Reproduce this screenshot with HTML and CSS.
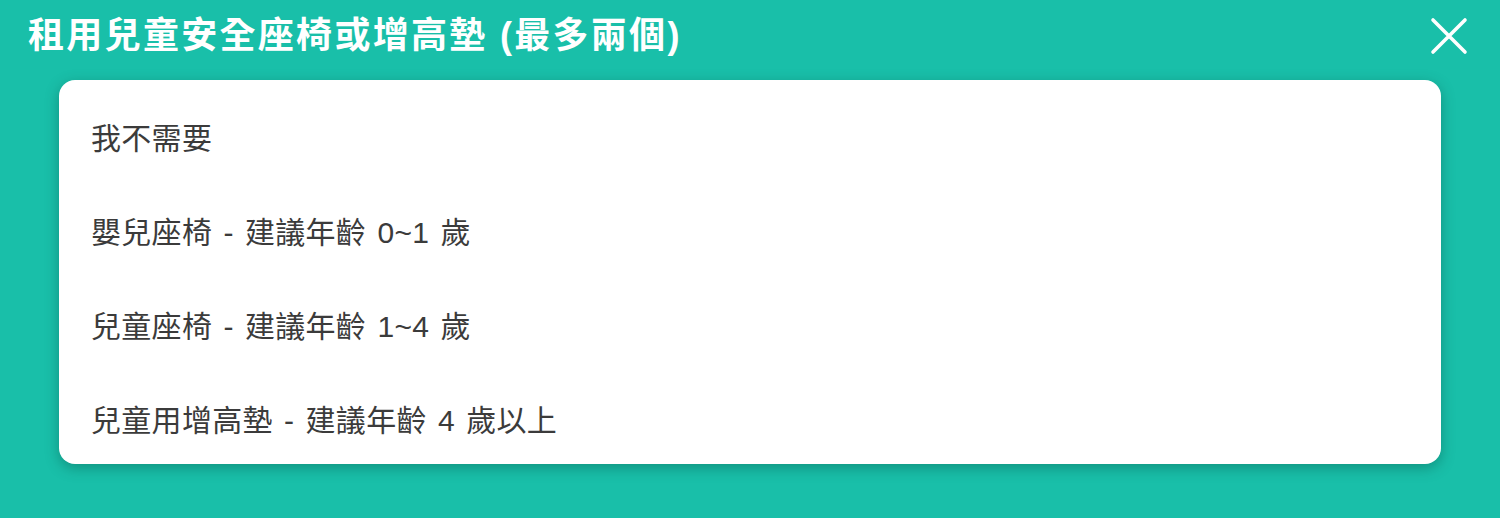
FILE: index.html
```html
<!DOCTYPE html>
<html lang="zh-Hant">
<head>
<meta charset="utf-8">
<title>租用兒童安全座椅或增高墊</title>
<link rel="stylesheet" href="styles.css">
</head>
<body>
<div class="sheet">
  <header class="sheet-header">
    <h1 class="sheet-title">租用兒童安全座椅或增高墊 (最多兩個)</h1>
    <button class="close-btn" aria-label="關閉">
      <svg width="38" height="38" viewBox="0 0 38 38" fill="none" stroke="#fff" stroke-width="3.6" stroke-linecap="round">
        <path d="M3 3 L35 35 M35 3 L3 35"/>
      </svg>
    </button>
  </header>
  <ul class="option-list">
    <li class="option">我不需要</li>
    <li class="option">嬰兒座椅 - 建議年齡 0~1 歲</li>
    <li class="option">兒童座椅 - 建議年齡 1~4 歲</li>
    <li class="option">兒童用增高墊 - 建議年齡 4 歲以上</li>
  </ul>
</div>
</body>
</html>
```
FILE: styles.css
```css
html, body {
  margin: 0;
  padding: 0;
  height: 100%;
}
body {
  background: #19bfa9;
  font-family: "Liberation Sans", "Noto Sans CJK TC", sans-serif;
  overflow: hidden;
}
.sheet {
  width: 1500px;
  height: 518px;
  box-sizing: border-box;
  padding: 0 59px;
  display: flex;
  flex-direction: column;
}
.sheet-header {
  height: 80px;
  display: flex;
  align-items: center;
  justify-content: space-between;
  margin: 0 -59px;
  padding: 0 32px 8px 28px;
  box-sizing: border-box;
}
.sheet-title {
  margin: 0;
  color: #fff;
  font-size: 36px;
  font-weight: 700;
  letter-spacing: 2.3px;
  line-height: 1;
}
.close-btn {
  background: none;
  border: 0;
  padding: 0;
  width: 38px;
  height: 38px;
  display: flex;
  cursor: pointer;
}
.option-list {
  list-style: none;
  margin: 0;
  padding: 9px 0 0;
  background: #fff;
  border-radius: 16px;
  height: 384px;
  box-sizing: border-box;
  overflow: hidden;
  box-shadow: 0 4px 14px rgba(0, 60, 50, 0.35);
}
.option {
  height: 94px;
  display: flex;
  align-items: center;
  padding: 0 32px;
  font-size: 30px;
  color: #3b3b3b;
  letter-spacing: 0.3px;
  word-spacing: 2.6px;
}
```
